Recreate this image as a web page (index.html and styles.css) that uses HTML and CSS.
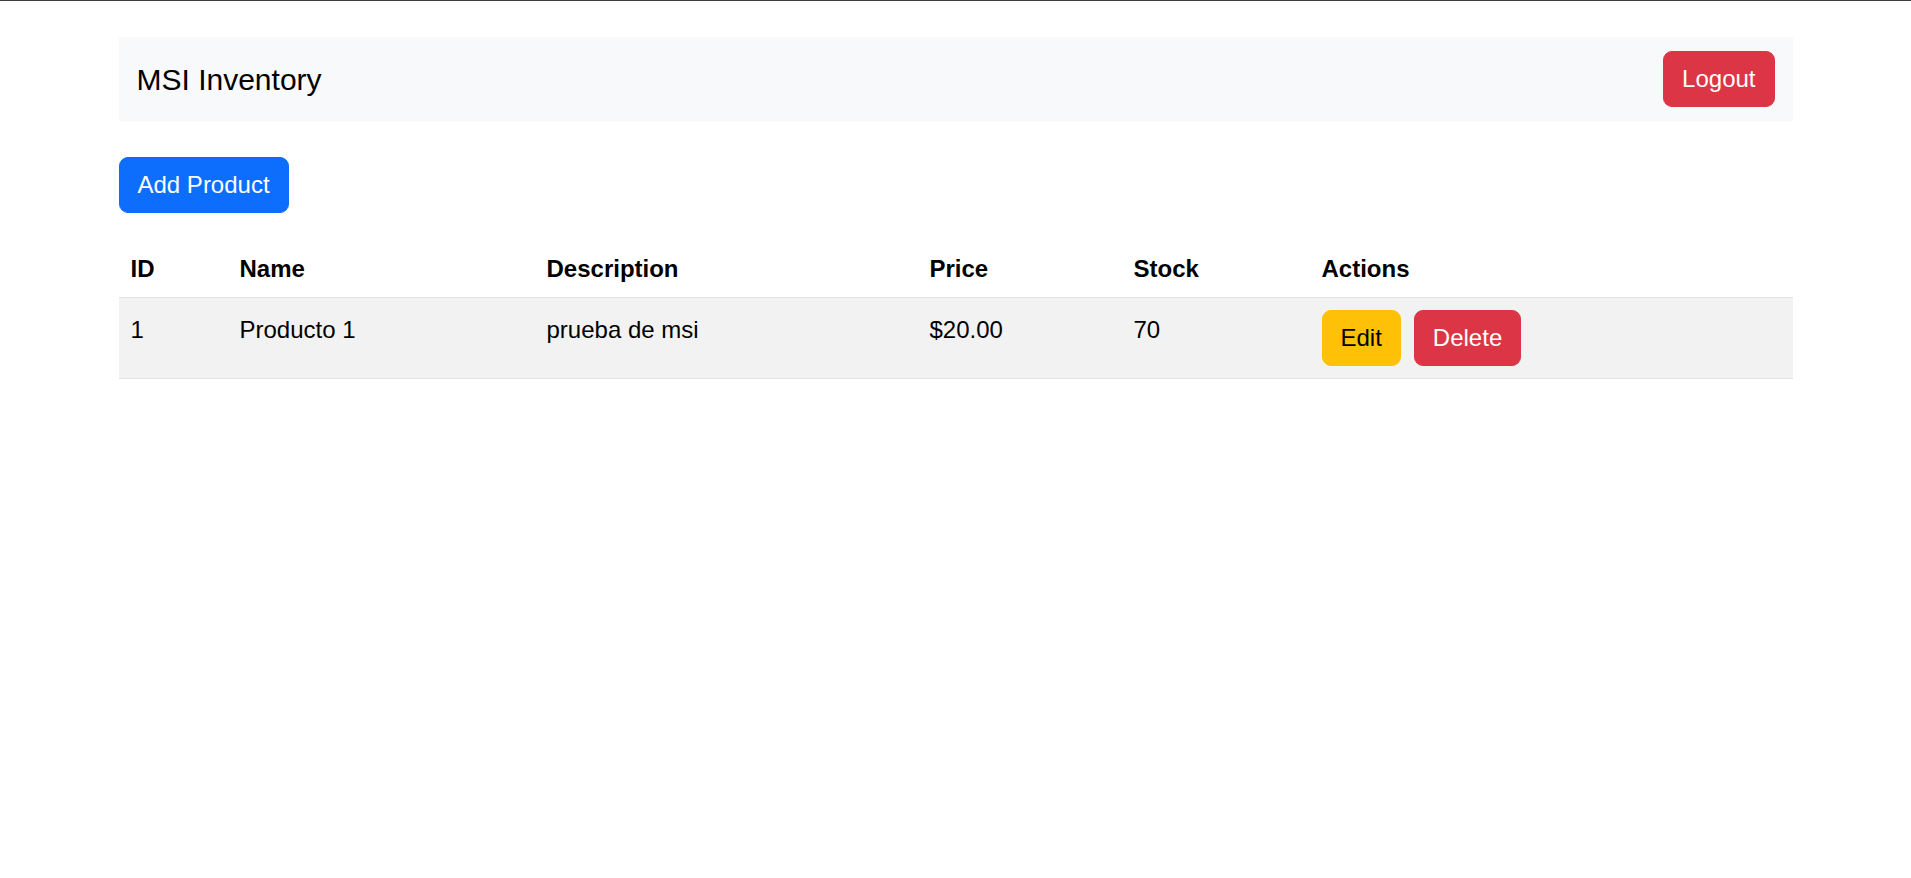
FILE: index.html
```html
<!DOCTYPE html>
<html lang="en">
<head>
<meta charset="utf-8">
<title>MSI Inventory</title>
<link rel="stylesheet" href="styles.css">
</head>
<body>
<div class="container">
  <nav class="navbar">
    <div class="navbar-inner">
      <span class="brand">MSI Inventory</span>
      <button class="btn btn-danger">Logout</button>
    </div>
  </nav>
  <button class="btn btn-primary add-btn">Add Product</button>
  <table class="table">
    <thead>
      <tr>
        <th class="col-id">ID</th>
        <th class="col-name">Name</th>
        <th class="col-desc">Description</th>
        <th class="col-price">Price</th>
        <th class="col-stock">Stock</th>
        <th class="col-actions">Actions</th>
      </tr>
    </thead>
    <tbody>
      <tr class="striped">
        <td class="text-cell">1</td>
        <td class="text-cell">Producto 1</td>
        <td class="text-cell">prueba de msi</td>
        <td class="text-cell">$20.00</td>
        <td class="text-cell">70</td>
        <td>
          <div class="actions">
            <button class="btn btn-warning">Edit</button>
            <button class="btn btn-danger">Delete</button>
          </div>
        </td>
      </tr>
    </tbody>
  </table>
</div>
</body>
</html>
```

FILE: styles.css
```css
html, body {
  margin: 0;
  padding: 0;
  background: #fff;
}

body {
  border-top: 1px solid #3d3d3d;
  font-family: "Liberation Sans", Arial, sans-serif;
  font-size: 24px;
  line-height: 36px;
  color: #212529;
}

.container {
  max-width: 1710px;
  margin: 36px auto 0;
  padding: 0 18px;
  box-sizing: border-box;
}

.navbar {
  background: #f8f9fa;
  padding: 12px 0;
}

.navbar-inner {
  display: flex;
  justify-content: space-between;
  align-items: center;
  padding: 0 18px;
}

.brand {
  font-size: 30px;
  line-height: 45px;
  padding: 7.5px 0;
  color: #000;
}

.btn {
  font-family: inherit;
  font-size: 24px;
  line-height: 36px;
  padding: 9px 18px;
  border: 1.5px solid transparent;
  border-radius: 9px;
  cursor: pointer;
}

.btn-danger {
  background: #dc3545;
  border-color: #dc3545;
  color: #fff;
}

.btn-primary {
  background: #0d6efd;
  border-color: #0d6efd;
  color: #fff;
}

.btn-warning {
  background: #ffc107;
  border-color: #ffc107;
  color: #000;
}

.add-btn {
  margin-top: 36px;
  display: block;
}

.table {
  width: 100%;
  margin-top: 24px;
  border-collapse: collapse;
  table-layout: fixed;
}

.table th,
.table td {
  padding: 12px;
  text-align: left;
  vertical-align: top;
  border-bottom: 1px solid #dee2e6;
}

.table th {
  padding-top: 14px;
  padding-bottom: 10px;
  font-weight: bold;
  color: #000;
}

.table td {
  color: #000;
}

.table td.text-cell {
  padding-top: 14px;
  padding-bottom: 10px;
}

.striped td {
  background: #f2f2f2;
}

.col-id { width: 85px; }
.col-name { width: 283px; }
.col-desc { width: 359px; }
.col-price { width: 180px; }
.col-stock { width: 164px; }

.actions {
  display: flex;
  gap: 13px;
}
```
